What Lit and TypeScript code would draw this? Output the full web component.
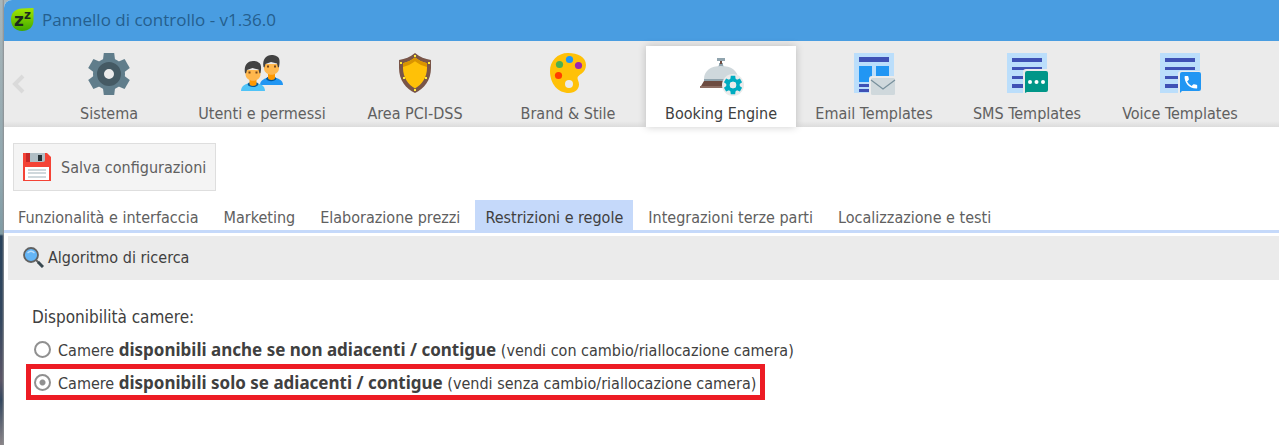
import { LitElement, html, svg, css } from "lit";
import { customElement, state } from "lit/decorators.js";

const gearTeeth = (cx: number, cy: number, w: number, r: number, fill: string) =>
  [0, 60, 120].map(
    (a) => svg`<path fill=${fill} transform="rotate(${a} ${cx} ${cy})"
      d="M${cx - w} ${cy - r}h${2 * w}l${w * 0.5} ${r}l${-w * 0.5} ${r}h${-2 * w}l${-w * 0.5} ${-r}z"/>`
  );

const page = svg`<path fill="#bbdefb" d="M4 3h40v40H4z"/>`;
const textLines = svg`<path fill="#3f51b5" d="M9 8h30v4H9zM9 17h30v3H9zM9 26h30v3H9zM9 34h30v4H9z"/>`;

const icons = {
  system: svg`
    ${gearTeeth(24, 24, 5.2, 21, "#607d8b")}
    <circle cx="24" cy="24" r="16" fill="#607d8b"/>
    <circle cx="24" cy="24" r="8.5" fill="#ebebeb" stroke="#455a64" stroke-width="7"/>`,
  users: svg`
    <path fill="#2196f3" d="M22 35c0-5 5-7.500 11.500-7.500S45 30 45 35z"/>
    <path fill="#01579b" d="M28 28.500c1 3.500 9 3.500 10.500 0l-1.500-1.500h-7.500z"/>
    <path fill="#ff9800" d="M30 22h7v6c0 2.500-7 2.500-7 0z"/>
    <path fill="#ffb74d" d="M26 14h15v4c0 9-15 9-15 0z"/>
    <path fill="#424242" d="M25.500 17c-1.500-8 3-12 8-12 4 0 5.500 1.500 5.500 1.500 3 1 3 6 2 10.500l-1 .500-1-4-6-1.500-5.500 2-1 3.500z"/>
    <path fill="#784719" d="M29 15.500h2v2h-2zM36 15.500h2v2h-2z"/>
    <path fill="#4fc3f7" d="M3 41c0-5.500 5-8 12-8s12 2.500 12 8z"/>
    <path fill="#01579b" d="M9.500 34c1 4 10 4 11 0l-1.500-1.500h-8z"/>
    <path fill="#ff9800" d="M11.500 28h7v6c0 2.500-7 2.500-7 0z"/>
    <path fill="#ffb74d" d="M7.500 20h15v4c0 9-15 9-15 0z"/>
    <path fill="#424242" d="M7 23c-1.500-8 3-12 8-12 4 0 5.500 1.500 5.500 1.500 3 1 3 6 2 10.500l-1 .500-1-4-6-1.500-5.500 2-1 3.500z"/>
    <path fill="#784719" d="M10.500 21.500h2v2h-2zM17.500 21.500h2v2h-2z"/>`,
  shield: svg`
    <path fill="#795548" d="M24 3c5 4 10 6 16 7v8c0 12-7 21-16 25C15 39 8 30 8 18v-8c6-1 11-3 16-7z"/>
    <path fill="#ffc107" d="M24 7.500c4 3 8 4.800 12 5.700V18c0 9-5 16.500-12 20.500C17 34.500 12 27 12 18v-4.800c4-.900 8-2.700 12-5.700z"/>
    <path fill="#d99400" d="M24 7.500c4 3 8 4.800 12 5.700v3.800c-4-.900-8-2.700-12-5.700-4 3-8 4.800-12 5.700v-3.800c4-.900 8-2.700 12-5.700z"/>
    <path fill="#ffeb3b" d="M23 5h2v2h-2zM9 12h2v2H9zM37 12h2v2h-2zM12 27h2v2h-2zM34 27h2v2h-2zM23 39h2v2h-2z"/>`,
  palette: svg`
    <path fill="#ffc107" d="M24 3C13.500 3 6 11 6 21c0 13 8 22 19 22 6 0 10-4 10-8.500 0-3-1.500-4.500-1.500-6.500 0-3.500 8.500-4.500 8.500-13C42 7 34 3 24 3z"/>
    <circle cx="25" cy="34" r="4" fill="#ebebeb"/>
    <circle cx="15.500" cy="14.500" r="3.600" fill="#4caf50"/>
    <circle cx="25.500" cy="9.500" r="3.600" fill="#2196f3"/>
    <circle cx="34.500" cy="15.500" r="3.600" fill="#9c27b0"/>
    <circle cx="14.500" cy="25.500" r="3.600" fill="#ff3d00"/>`,
  bell: svg`
    <path fill="#90a4ae" d="M20 8h8v3h-8zM22 13h4v2l1 2h-6l1-2z"/>
    <path fill="#6d4c41" d="M23 11h2v3h-2z"/>
    <path fill="#cfd8dc" d="M7 29c0-8.500 7-13 17-13s17 4.500 17 13z"/>
    <path fill="#90a4ae" d="M7 29h34v2H7z"/>
    <path fill="#6d4c41" d="M7 31h34v5H4z"/>
    <path fill="#8d6e63" d="M3 36h38v2H3z"/>
    <circle cx="36" cy="35" r="11" fill="#ebebeb"/>
    ${gearTeeth(36, 35, 2.2, 9.2, "#00acc1")}
    <circle cx="36" cy="35" r="5" fill="#ebebeb" stroke="#00acc1" stroke-width="3.600"/>
    <circle cx="36" cy="35" r="3.200" fill="#ebebeb"/>`,
  email: svg`${page}
    <path fill="#3f51b5" d="M9 7h30v5H9zM9 34h14v3H9zM9 39h14v3H9z"/>
    <path fill="#2196f3" d="M9 16h13v16H9zM26 16h13v16H26z"/>
    <rect x="19" y="26" width="27" height="19" rx="3" fill="#ebebeb"/>
    <rect x="21" y="28" width="24" height="17" rx="1.500" fill="#cfd8dc"/>
    <path fill="none" stroke="#78909c" stroke-width="1.200" d="M21 30l12 9 12-9"/>`,
  sms: svg`${page}${textLines}
    <path fill="#ebebeb" d="M20 43V22q0-3 3-3h22v24z"/>
    <path fill="#009688" d="M22 43V23q0-2 2-2h19q2 0 2 2v17q0 2-2 2H24z"/>
    <circle cx="27" cy="32" r="2" fill="#fff"/><circle cx="33.500" cy="32" r="2" fill="#fff"/><circle cx="40" cy="32" r="2" fill="#fff"/>`,
  voice: svg`${page}${textLines}
    <path fill="#ebebeb" d="M22 43V24q0-3 3-3h20v22z"/>
    <path fill="#2196f3" d="M24 43V24q0-2 2-2h17q2 0 2 2v15q0 2-2 2H26z"/>
    <path fill="#fff" d="M29.300 26h2.300q.700 0 .800.700l.500 2.600q0 .500-.300.800l-1.500 1.400q1.600 3 4.500 4.600l1.500-1.500q.400-.400.900-.300l2.500.500q.700.200.700.800v2.300q0 .600-.700.700C32.500 38.600 28.400 32 28.600 26.700q.100-.700.700-.700z"/>`,
};

const sections: { label: string; icon: keyof typeof icons }[] = [
  { label: "Sistema", icon: "system" },
  { label: "Utenti e permessi", icon: "users" },
  { label: "Area PCI-DSS", icon: "shield" },
  { label: "Brand & Stile", icon: "palette" },
  { label: "Booking Engine", icon: "bell" },
  { label: "Email Templates", icon: "email" },
  { label: "SMS Templates", icon: "sms" },
  { label: "Voice Templates", icon: "voice" },
];

const subTabs = [
  "Funzionalità e interfaccia",
  "Marketing",
  "Elaborazione prezzi",
  "Restrizioni e regole",
  "Integrazioni terze parti",
  "Localizzazione e testi",
];

const options = [
  { bold: "disponibili anche se non adiacenti / contigue", note: "(vendi con cambio/riallocazione camera)" },
  { bold: "disponibili solo se adiacenti / contigue", note: "(vendi senza cambio/riallocazione camera)" },
];

@customElement("app-root")
export class AppRoot extends LitElement {
  @state() private section = 4;
  @state() private subTab = 3;
  @state() private choice = 1;

  static styles = css`
    :host {
      display: block;
      box-sizing: border-box;
      min-height: 100vh;
      padding-left: 4px;
      overflow: hidden;
      background: linear-gradient(90deg, transparent 2px, #8c8f92 4px, transparent 4px),
        linear-gradient(#a9b6ba, #8fa6ae 180px, #7f9ba4 234px, #28425c 236px, #33475f 320px, #5b5566 380px, #33475f 400px, #8a8488);
      font-family: "DejaVu Sans Condensed", "DejaVu Sans", sans-serif;
      font-stretch: condensed;
      font-size: 16px;
      line-height: 20px;
      color: #404040;
    }
    * { box-sizing: border-box; }
    button { font: inherit; color: inherit; border: 0; background: none; padding: 0; margin: 0; white-space: nowrap; }
    svg { display: block; flex: none; }
    .window { min-height: 100vh; background: #fff; border-top-left-radius: 8px; overflow: hidden; }
    .title {
      display: flex; align-items: center; gap: 8px; height: 41px; padding: 0 0 2px 6px;
      background: #499de1; color: #255f8e;
      font-family: "Open Sans", "Noto Sans", sans-serif; font-stretch: normal;
    }
    .title h1 { margin: 0; font-size: 17px; font-weight: 400; white-space: nowrap; }
    .zz { font: bold 17px "DejaVu Sans", sans-serif; }
    .zz-small { font: bold 12px "DejaVu Sans", sans-serif; }
    .ribbon {
      display: flex; gap: 3px; padding-top: 5px; height: 86px;
      background: linear-gradient(#ebebeb 80px, #dcdcdc);
    }
    .back { width: 27px; display: grid; place-items: center; padding-bottom: 6px; }
    .section {
      flex: 0 0 150px; display: flex; flex-direction: column; align-items: center;
      padding-top: 4px; gap: 6px; color: #606060;
    }
    .section.active { background: #fff; color: #404040; box-shadow: 0 0 8px #0003; }
    .toolbar { padding: 16px 9px 9px; }
    .save {
      display: flex; align-items: center; gap: 10px; height: 48px; padding: 0 9px;
      background: #f4f4f4; border: 1px solid #dedede; color: #606060;
    }
    .save span { padding-top: 2px; }
    .subtabs { display: flex; gap: 5px; padding-left: 4px; border-bottom: 3px solid #c5d9fa; }
    .subtab { height: 30px; padding: 6px 10px 0; color: #606060; line-height: 24px; }
    .subtab.active { background: #c5d9fa; color: #404040; }
    .heading {
      display: flex; align-items: center; gap: 4px; height: 44px; margin: 3px 0 0 4px; padding: 0 0 2px 15px;
      background: #ebebeb;
    }
    .heading h2 { margin: 0; padding-top: 2px; font-size: 16px; font-weight: 400; }
    .options {
      display: flex; flex-direction: column; align-items: flex-start; gap: 7px;
      margin: 0; border: 0; padding: 27px 27px 40px;
    }
    .options legend { float: left; padding: 0 0 0 1px; margin-bottom: 2px; font-size: 17px; }
    .option { display: flex; align-items: center; gap: 7px; height: 26px; padding: 0 4px 0 3px; white-space: nowrap; }
    .option.active { outline: 5px solid #ed1c24; }
    .option input {
      appearance: none; width: 17px; height: 17px; margin: 0; border: 2px solid #909090; border-radius: 50%;
      background: #fff;
    }
    .option input:checked { background: radial-gradient(circle, #909090 2.5px, #fff 3.5px); }
    .option span { padding-top: 4px; }
    .option b { font-family: "Noto Sans", sans-serif; font-size: 17px; font-stretch: normal; line-height: 1; }
  `;

  render() {
    return html`
      <main class="window">
        <header class="title">
          <svg width="24" height="26" viewBox="0 0 24 26" aria-hidden="true">
            <defs><linearGradient id="leaf" x1="0" y1="0" x2="0" y2="1">
              <stop offset="0" stop-color="#a4e800"/><stop offset="1" stop-color="#3fa800"/>
            </linearGradient></defs>
            <path fill="url(#leaf)" d="M12 1.500L23.500 1v12C23.500 20 19 24 12 24S1 19 1 12.500 5 2 12 1.500z"/>
            <text class="zz" x="4" y="19" fill="#1d2b1d">z</text>
            <text class="zz-small" x="14" y="12" fill="#1d2b1d">z</text>
          </svg>
          <h1>Pannello di controllo - v1.36.0</h1>
        </header>
        <nav class="ribbon">
          <button class="back" aria-label="Indietro">
            <svg width="14" height="20" viewBox="0 0 14 20"><path fill="none" stroke="#dadada" stroke-width="4" d="M12 2L4 10l8 8"/></svg>
          </button>
          ${sections.map((s, i) => html`
            <button class="section ${i === this.section ? "active" : ""}" @click=${() => (this.section = i)}>
              <svg width="48" height="48" viewBox="0 0 48 48" aria-hidden="true">${icons[s.icon]}</svg>
              <span>${s.label}</span>
            </button>`)}
        </nav>
        <div class="toolbar">
          <button class="save">
            <svg width="28" height="28" viewBox="0 0 28 28" aria-hidden="true">
              <path fill="#f44336" d="M0 0h24l4 4v24H0z"/>
              <path fill="#c62828" d="M3 0h4v9H3z"/>
              <path fill="#b0bec5" d="M7 0h15v7q0 2-2 2H7z"/>
              <path fill="#263238" d="M15 2h4v6h-4z"/>
              <path fill="#fff" d="M2 14h24v13H2z"/>
              <path fill="#cfd8dc" d="M5 16h18v2H5zM5 19h18v2H5zM5 23h18v2H5z"/>
            </svg>
            <span>Salva configurazioni</span>
          </button>
        </div>
        <nav class="subtabs">
          ${subTabs.map((t, i) => html`
            <button class="subtab ${i === this.subTab ? "active" : ""}" @click=${() => (this.subTab = i)}>${t}</button>`)}
        </nav>
        <div class="heading">
          <svg width="21" height="21" viewBox="0 0 21 21" aria-hidden="true">
            <path stroke="#616161" stroke-width="2" d="M13 13l3 3"/>
            <path stroke="#37474f" stroke-width="3" d="M15 15l5 5"/>
            <circle cx="8" cy="8" r="7" fill="#64b5f6" stroke="#616161" stroke-width="1.800"/>
            <path fill="none" stroke="#bbdefb" stroke-width="1.200" d="M4.500 6q3.500-3.500 7 0"/>
          </svg>
          <h2>Algoritmo di ricerca</h2>
        </div>
        <fieldset class="options">
          <legend>Disponibilità camere:</legend>
          ${options.map((o, i) => html`
            <label class="option ${i === this.choice ? "active" : ""}">
              <input type="radio" name="rooms" .checked=${i === this.choice} @change=${() => (this.choice = i)} />
              <span>Camere <b>${o.bold}</b> ${o.note}</span>
            </label>`)}
        </fieldset>
      </main>
    `;
  }
}
